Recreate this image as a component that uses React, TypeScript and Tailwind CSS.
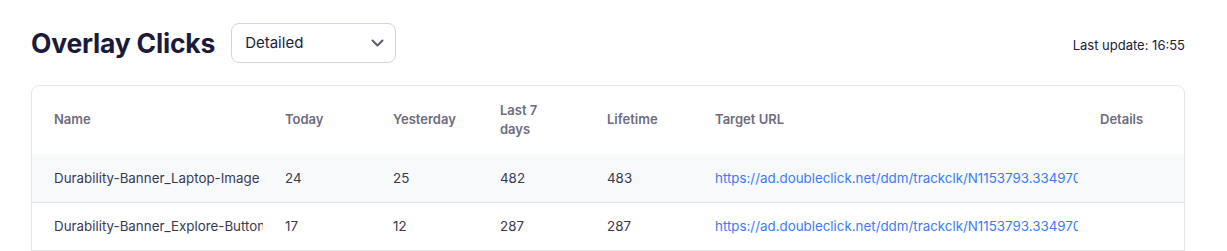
import React from "react";

const rows = [
  { name: "Durability-Banner_Laptop-Image", today: 24, yesterday: 25, last7: 482, lifetime: 483, url: "https://ad.doubleclick.net/ddm/trackclk/N1153793.334970AUTOMOTIVE" },
  { name: "Durability-Banner_Explore-Button", today: 17, yesterday: 12, last7: 287, lifetime: 287, url: "https://ad.doubleclick.net/ddm/trackclk/N1153793.334970AUTOMOTIVE" },
];

export default function App() {
  return (
    <div className="min-h-screen bg-white pl-[31px] pr-[42px] pt-[23px] text-[13px]" style={{ fontFamily: "Inter, 'Noto Sans', sans-serif" }}>
      <div className="flex items-center justify-between h-[40px]">
        <div className="flex items-center gap-4">
          <h1 className="text-[26.5px] font-bold text-[#1b1a3a] leading-none tracking-[-0.2px]">Overlay Clicks</h1>
          <div className="flex items-center justify-between w-[165px] h-[40px] rounded-lg border border-[#d4d4dc] pl-[13px] pr-[11px] text-[15px] text-[#22213a]">
            <span>Detailed</span>
            <svg width="13" height="8" viewBox="0 0 13 8" fill="none" stroke="#5b5a6e" strokeWidth="2" strokeLinecap="round" strokeLinejoin="round">
              <path d="M1.5 1.5l5 5 5-5" />
            </svg>
          </div>
        </div>
        <div className="text-[13px] text-[#22213a] pt-[6px]">Last update: 16:55</div>
      </div>
      <div className="mt-[22px] rounded-lg border border-[#e6e6ea] overflow-hidden">
        <table className="table-fixed border-collapse w-full">
          <colgroup>
            <col className="w-[231px]" />
            <col className="w-[108px]" />
            <col className="w-[107px]" />
            <col className="w-[107px]" />
            <col className="w-[108px]" />
            <col className="w-[385px]" />
            <col className="w-[106px]" />
          </colgroup>
          <thead>
            <tr className="h-[68px] text-left text-[#6e6d7e] font-semibold leading-[19px]">
              <th className="px-[22px] pb-[1px] font-semibold">Name</th>
              <th className="px-[22px] pb-[1px] font-semibold">Today</th>
              <th className="px-[22px] pb-[1px] font-semibold">Yesterday</th>
              <th className="px-[22px] pb-[1px] font-semibold">Last 7 days</th>
              <th className="px-[22px] pb-[1px] font-semibold">Lifetime</th>
              <th className="px-[22px] pb-[1px] font-semibold">Target URL</th>
              <th className="px-[22px] pb-[1px] font-semibold">Details</th>
            </tr>
          </thead>
          <tbody className="text-[13.35px]">
            {rows.map((r, i) => (
              <tr key={i} className={`h-[48px] border-b border-[#e6e6ea] text-[#3a3950] ${i === 0 ? "bg-[#f8f9fb]" : "bg-white"}`}>
                <td className="px-[22px] whitespace-nowrap overflow-hidden">{r.name}</td>
                <td className="px-[22px] whitespace-nowrap overflow-hidden">{r.today}</td>
                <td className="px-[22px] whitespace-nowrap overflow-hidden">{r.yesterday}</td>
                <td className="px-[22px] whitespace-nowrap overflow-hidden">{r.last7}</td>
                <td className="px-[22px] whitespace-nowrap overflow-hidden">{r.lifetime}</td>
                <td className="px-[22px] whitespace-nowrap overflow-hidden text-[#3b7bf6]">{r.url}</td>
                <td className="px-[22px] whitespace-nowrap overflow-hidden"></td>
              </tr>
            ))}
          </tbody>
        </table>
        <div className="h-[40px]" />
      </div>
    </div>
  );
}
